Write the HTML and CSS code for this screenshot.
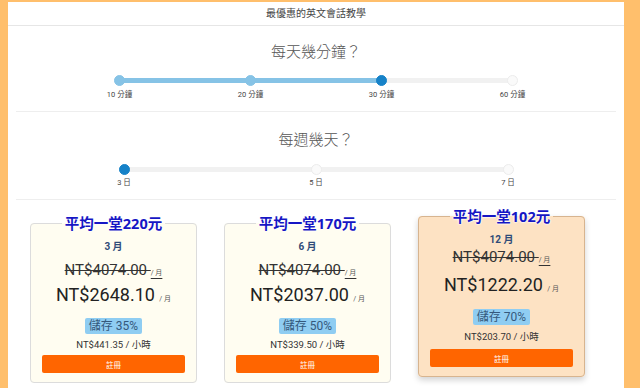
FILE: index.html
```html
<!DOCTYPE html>
<html>
  <head>
    <title>最優惠的英文會話教學</title>
    <meta charset="utf-8" />
    <meta name="viewport" content="width=device-width, initial-scale=1.0" />
    <link rel="stylesheet" href="styles.css">
  </head>
  <body>
    <main class="panel">
      <header class="top">最優惠的英文會話教學</header>

      <section class="question q-minutes">
        <h2>每天幾分鐘？</h2>
        <div class="slider slider-minutes">
          <div class="track"><div class="fill" style="width: 66.67%"></div></div>
          <div class="stop done"><span class="dot"></span><span class="tick">10 分鐘</span></div>
          <div class="stop done"><span class="dot"></span><span class="tick">20 分鐘</span></div>
          <div class="stop active"><span class="dot"></span><span class="tick">30 分鐘</span></div>
          <div class="stop"><span class="dot"></span><span class="tick">60 分鐘</span></div>
        </div>
      </section>

      <section class="question q-days">
        <h2>每週幾天？</h2>
        <div class="slider slider-days">
          <div class="track"><div class="fill" style="width: 0%"></div></div>
          <div class="stop active"><span class="dot"></span><span class="tick">3 日</span></div>
          <div class="stop"><span class="dot"></span><span class="tick">5 日</span></div>
          <div class="stop"><span class="dot"></span><span class="tick">7 日</span></div>
        </div>
      </section>

      <div class="plans">
        <fieldset class="plan">
          <legend>平均一堂220元</legend>
          <div class="months">3 月</div>
          <div class="old">NT$4074.00 <small>/ 月</small></div>
          <div class="now">NT$2648.10 <small>/ 月</small></div>
          <div class="save">儲存 35%</div>
          <div class="hourly">NT$441.35 / 小時</div>
          <button type="button">註冊</button>
        </fieldset>

        <fieldset class="plan">
          <legend>平均一堂170元</legend>
          <div class="months">6 月</div>
          <div class="old">NT$4074.00 <small>/ 月</small></div>
          <div class="now">NT$2037.00 <small>/ 月</small></div>
          <div class="save">儲存 50%</div>
          <div class="hourly">NT$339.50 / 小時</div>
          <button type="button">註冊</button>
        </fieldset>

        <fieldset class="plan featured">
          <legend>平均一堂102元</legend>
          <div class="months">12 月</div>
          <div class="old">NT$4074.00 <small>/ 月</small></div>
          <div class="now">NT$1222.20 <small>/ 月</small></div>
          <div class="save">儲存 70%</div>
          <div class="hourly">NT$203.70 / 小時</div>
          <button type="button">註冊</button>
        </fieldset>
      </div>
    </main>
  </body>
</html>
```

FILE: styles.css
```css
body {
  margin: 0;
  padding: 2px 16px 0 8px;
  background-color: #ffbf6c;
  font-family: Roboto, "Noto Sans CJK TC", sans-serif;
  color: #333;
}

.panel {
  background-color: #fff;
  height: 386px;
  overflow: hidden;
}

.top {
  height: 23px;
  line-height: 23px;
  text-align: center;
  font-size: 10px;
  color: #444;
  border-bottom: 1px solid #e6e6e6;
}

.question {
  margin: 0 8px;
  text-align: center;
  border-bottom: 1px solid #eeeeee;
}

.question h2 {
  margin: 0;
  font-size: 15px;
  line-height: 20px;
  font-weight: 300;
  color: #555;
}

.q-minutes {
  padding: 16px 0 11px;
}

.q-days {
  padding: 18px 0 11px;
}

.slider {
  position: relative;
  display: flex;
  justify-content: space-between;
  margin: 13px auto 0;
}

.slider-minutes {
  width: 433px;
}

.slider-days {
  width: 424px;
  margin-top: 14px;
}

.track {
  position: absolute;
  top: 3px;
  left: 20px;
  right: 20px;
  height: 5px;
  border-radius: 3px;
  background-color: #f1f1f1;
}

.fill {
  height: 100%;
  border-radius: 3px;
  background-color: #86c3e6;
}

.stop {
  position: relative;
  width: 40px;
  display: flex;
  flex-direction: column;
  align-items: center;
  gap: 4px;
}

.dot {
  width: 11px;
  height: 11px;
  box-sizing: border-box;
  border-radius: 50%;
  background-color: #fafafa;
  border: 1px solid #ececec;
}

.stop.done .dot {
  background-color: #86c3e6;
  border-color: #86c3e6;
}

.stop.active .dot {
  background-color: #1682c8;
  border-color: #1682c8;
}

.tick {
  font-size: 7.5px;
  line-height: 10px;
  color: #444;
  white-space: nowrap;
}

.slider-days .stop {
  gap: 3px;
}

.plans {
  display: flex;
  align-items: flex-start;
  gap: 27px;
  padding-left: 22px;
}

.plan {
  box-sizing: border-box;
  width: 167px;
  min-width: 0;
  margin: 14px 0 0;
  padding: 0 11px 9px;
  border: 1px solid #dcdcdc;
  border-radius: 4px;
  background-color: #fffdf1;
  text-align: center;
}

.plan legend {
  margin: 0 auto;
  padding: 0 3px;
  font-family: "Noto Sans", "Noto Sans CJK TC", sans-serif;
  font-size: 14.5px;
  line-height: 18px;
  font-weight: 700;
  color: #1616c4;
  text-shadow: 0 0 2px #fff, 0 0 2px #fff, 0 0 2px #fff;
}

.months {
  margin-top: 8px;
  height: 14px;
  font-size: 10px;
  line-height: 14px;
  font-weight: 700;
  color: #2f4b78;
}

.old,
.now {
  overflow: hidden;
  white-space: nowrap;
}

.old {
  margin-top: 6px;
  height: 20px;
  font-size: 15px;
  line-height: 20px;
  text-decoration: line-through;
  color: #333;
}

.now {
  margin-top: 3px;
  height: 24px;
  font-size: 18px;
  line-height: 24px;
  color: #222;
}

.plan small {
  font-size: 7px;
  line-height: 1;
  color: #555;
}

.save {
  display: inline-block;
  vertical-align: top;
  margin-top: 11px;
  padding: 0 4px;
  height: 16px;
  line-height: 16px;
  font-size: 12px;
  color: #35597c;
  background-color: #8fcdf2;
  border-radius: 2px;
}

.hourly {
  margin-top: 5px;
  height: 12px;
  font-size: 9.5px;
  line-height: 12px;
  color: #333;
}

.plan button {
  display: block;
  width: 100%;
  height: 18px;
  margin-top: 4px;
  padding: 0;
  border: 0;
  border-radius: 2px;
  background-color: #ff6500;
  color: #fff;
  font-family: inherit;
  font-size: 7.5px;
}

.featured {
  margin-top: 7px;
  background-color: #fde2c3;
  border-color: #d7b48f;
  box-shadow: 0 3px 6px rgba(0, 0, 0, 0.18);
}

.featured .old {
  margin-top: 0;
}

.featured .now {
  margin-top: 6px;
}

.featured .save {
  margin-top: 12px;
}

.featured .hourly,
.featured button {
  margin-top: 6px;
}
```
